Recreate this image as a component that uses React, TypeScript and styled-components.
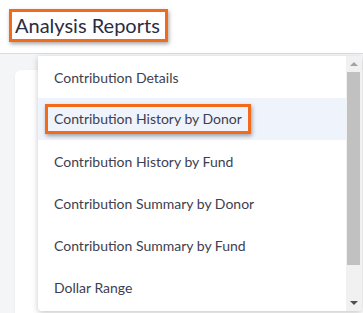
import { createGlobalStyle } from 'styled-components'
import styled from 'styled-components'

const GlobalStyle = createGlobalStyle`
  body {
    margin: 0;
    font-family: Lato, "Noto Sans", sans-serif;
    background: #f4f5f7;
  }
`

const Page = styled.div`
  position: relative;
  width: 363px;
  height: 313px;
  overflow: hidden;
  background: #f4f5f7;
`

const Header = styled.header`
  height: 54px;
  background: #fff;
  border-bottom: 1px solid #dcdde0;
  padding: 9px 0 0 9px;
  box-sizing: border-box;
`

const Callout = styled.span`
  display: inline-block;
  border: 3px solid #f26a1b;
  box-shadow: 1px 2px 4px rgba(0, 0, 0, 0.35);
  background: #fff;
`

const Title = styled(Callout)`
  margin: 0;
  padding: 2px 5px 3px 3px;
  font-size: 20px;
  font-weight: 400;
  line-height: 22px;
  color: #2b2d42;
`

const Main = styled.main`
  padding: 16px 0 0 15px;
`

const Card = styled.div`
  height: 260px;
  background: #fff;
  border-radius: 6px 0 0 0;
  box-shadow: 0 1px 3px rgba(0, 0, 0, 0.06);
`

const Dropdown = styled.div`
  position: absolute;
  left: 38px;
  top: 56px;
  width: 324px;
  height: 255px;
  display: flex;
  background: #fff;
  border-radius: 0 0 4px 4px;
  box-shadow: 0 2px 6px rgba(0, 0, 0, 0.22);
  overflow: hidden;
`

const List = styled.ul`
  flex: 1;
  margin: 0;
  padding: 0;
  list-style: none;
`

const Item = styled.li<{ $active?: boolean }>`
  height: 42px;
  display: flex;
  align-items: center;
  padding-left: ${({ $active }) => ($active ? '7px' : '16px')};
  background: ${({ $active }) => ($active ? '#eef3fc' : '#fff')};
  font-size: 14px;
  color: #3d3e50;
`

const ItemCallout = styled(Callout)`
  padding: 3px 6px 4px 6px;
  background: #eef3fc;
`

const Scrollbar = styled.div`
  width: 16px;
  display: flex;
  flex-direction: column;
  background: #f1f1f1;
`

const Arrow = styled.div<{ $down?: boolean }>`
  height: 16px;
  display: flex;
  align-items: center;
  justify-content: center;

  &::after {
    content: '';
    border-left: 4px solid transparent;
    border-right: 4px solid transparent;
    ${({ $down }) =>
      $down ? 'border-top: 4px solid #505050;' : 'border-bottom: 4px solid #a3a3a3;'}
  }
`

const Thumb = styled.div`
  height: 193px;
  margin: 0 2px 0 1px;
  background: #c1c1c1;
`

const Track = styled.div`
  flex: 1;
`

const reports = [
  'Contribution Details',
  'Contribution History by Donor',
  'Contribution History by Fund',
  'Contribution Summary by Donor',
  'Contribution Summary by Fund',
  'Dollar Range',
]

export default function App() {
  return (
    <Page>
      <GlobalStyle />
      <Header>
        <Title as="h1">Analysis Reports</Title>
      </Header>
      <Main>
        <Card />
      </Main>
      <Dropdown>
        <List>
          {reports.map((r, i) =>
            i === 1 ? (
              <Item key={r} $active>
                <ItemCallout>{r}</ItemCallout>
              </Item>
            ) : (
              <Item key={r}>{r}</Item>
            )
          )}
        </List>
        <Scrollbar>
          <Arrow />
          <Thumb />
          <Track />
          <Arrow $down />
        </Scrollbar>
      </Dropdown>
    </Page>
  )
}
